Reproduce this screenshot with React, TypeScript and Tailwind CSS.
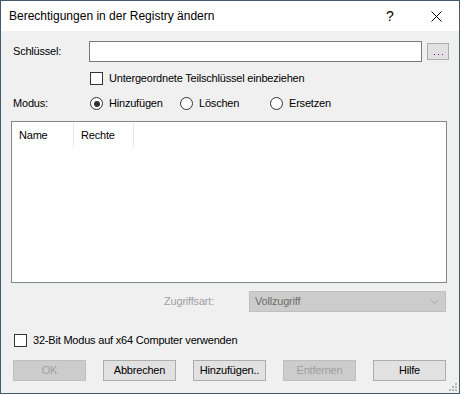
import React from 'react';

const font = "font-['Liberation_Sans',Arial,sans-serif]";

function CheckBox({ label }: { label: string }) {
  return (
    <div className="flex items-center gap-[6px] h-[13px]">
      <div className="w-[13px] h-[13px] border border-[#333333] bg-white shrink-0" />
      <span className="text-[11px] tracking-[-0.2px] text-black leading-none">{label}</span>
    </div>
  );
}

function Radio({ label, checked, width }: { label: string; checked?: boolean; width: string }) {
  return (
    <div className={`flex items-center gap-[6px] h-[13px] ${width}`}>
      <div className="w-[13px] h-[13px] rounded-full border border-[#333333] bg-white flex items-center justify-center shrink-0">
        {checked && <div className="w-[6px] h-[6px] rounded-full bg-[#333333]" />}
      </div>
      <span className="text-[11px] tracking-[-0.2px] text-black leading-none">{label}</span>
    </div>
  );
}

function Button({ label, disabled }: { label: string; disabled?: boolean }) {
  return (
    <div
      className={`w-[73px] h-[21px] flex items-center justify-center border text-[11px] tracking-[-0.2px] ${
        disabled
          ? 'bg-[#cccccc] border-[#bfbfbf] text-[#a0a0a0]'
          : 'bg-[#e1e1e1] border-[#adadad] text-black'
      }`}
    >
      {label}
    </div>
  );
}

export default function App() {
  return (
    <div className={`w-[460px] h-[394px] border border-[#43596f] bg-[#f0f0f0] flex flex-col ${font}`}>
      {/* Titelleiste */}
      <div className="h-[30px] bg-white flex items-center shrink-0">
        <span className="pl-[8px] text-[12px] text-black flex-1">Berechtigungen in der Registry ändern</span>
        <span className="w-[46px] text-center text-[14px] text-black">?</span>
        <div className="w-[46px] flex items-center justify-center">
          <svg width="11" height="11" viewBox="0 0 11 11">
            <path d="M0.5 0.5 L10.5 10.5 M10.5 0.5 L0.5 10.5" stroke="#000" strokeWidth="1" />
          </svg>
        </div>
      </div>

      {/* Schlüssel */}
      <div className="flex items-center mt-[10px] pl-[12px] h-[21px]">
        <span className="w-[76px] text-[11px] tracking-[-0.2px] text-black">Schlüssel:</span>
        <div className="w-[333px] h-[21px] bg-white border border-[#7a7a7a]" />
        <div className="ml-[5px] w-[22px] h-[17px] bg-[#e1e1e1] border border-[#adadad] flex items-end justify-center pb-[3px]">
          <svg width="9" height="2" viewBox="0 0 9 2">
            <rect x="0" y="0" width="1" height="1" fill="#6a0d8c" />
            <rect x="4" y="0" width="1" height="1" fill="#6a0d8c" />
            <rect x="8" y="0" width="1" height="1" fill="#6a0d8c" />
          </svg>
        </div>
      </div>

      <div className="mt-[10px] pl-[89px]">
        <CheckBox label="Untergeordnete Teilschlüssel einbeziehen" />
      </div>

      {/* Modus */}
      <div className="flex items-center mt-[12px] pl-[12px] h-[13px]">
        <span className="w-[77px] text-[11px] tracking-[-0.2px] text-black">Modus:</span>
        <Radio label="Hinzufügen" checked width="w-[90px]" />
        <Radio label="Löschen" width="w-[90px]" />
        <Radio label="Ersetzen" width="w-[90px]" />
      </div>

      {/* Liste */}
      <div className="mt-[11px] ml-[10px] w-[436px] h-[162px] bg-white border border-[#828790]">
        <div className="flex h-[25px] pt-[1px]">
          <div className="w-[62px] border-r border-[#e5e5e5] flex items-center pl-[7px] text-[11px] tracking-[-0.2px] text-black">
            Name
          </div>
          <div className="w-[60px] border-r border-[#e5e5e5] flex items-center pl-[7px] text-[11px] tracking-[-0.2px] text-black">
            Rechte
          </div>
        </div>
      </div>

      {/* Zugriffsart */}
      <div className="flex items-center mt-[8px] h-[21px]">
        <span className="w-[213px] text-right text-[11px] tracking-[-0.2px] text-[#a0a0a0]">Zugriffsart:</span>
        <div className="ml-[35px] w-[197px] h-[21px] bg-[#cccccc] border border-[#bfbfbf] flex items-center justify-between pl-[5px] pr-[6px]">
          <span className="text-[11px] tracking-[-0.2px] text-[#6d6d6d]">Vollzugriff</span>
          <svg width="9" height="5" viewBox="0 0 9 5">
            <path d="M0.5 0.5 L4.5 4.5 L8.5 0.5" stroke="#a8a8a8" strokeWidth="1" fill="none" />
          </svg>
        </div>
      </div>

      <div className="mt-[22px] pl-[13px]">
        <CheckBox label="32-Bit Modus auf x64 Computer verwenden" />
      </div>

      {/* Schaltflächen */}
      <div className="flex mt-[13px] pl-[12px] gap-[17px]">
        <Button label="OK" disabled />
        <Button label="Abbrechen" />
        <Button label="Hinzufügen.." />
        <Button label="Entfernen" disabled />
        <Button label="Hilfe" />
      </div>

      {/* Größenänderungsgriff */}
      <div className="flex-1 flex items-end justify-end pr-[2px] pb-[2px]">
        <svg width="8" height="8" viewBox="0 0 8 8">
          <rect x="6" y="0" width="2" height="2" fill="#b8b8b8" />
          <rect x="3" y="3" width="2" height="2" fill="#b8b8b8" />
          <rect x="6" y="3" width="2" height="2" fill="#b8b8b8" />
          <rect x="0" y="6" width="2" height="2" fill="#b8b8b8" />
          <rect x="3" y="6" width="2" height="2" fill="#b8b8b8" />
          <rect x="6" y="6" width="2" height="2" fill="#b8b8b8" />
        </svg>
      </div>
    </div>
  );
}
